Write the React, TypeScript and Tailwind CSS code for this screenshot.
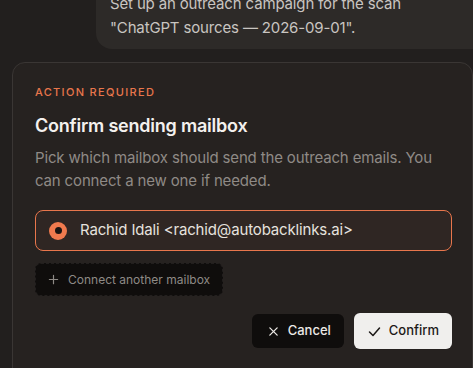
import React from "react";

export default function App() {
  return (
    <div
      className="w-[473px] h-[368px] overflow-hidden bg-[#221f1e] text-[#e8e4e0]"
      style={{ fontFamily: "Inter, 'Noto Sans', sans-serif" }}
    >
      <div className="-mt-[18px] pl-3 flex flex-col">
        <div className="ml-[84px] rounded-2xl rounded-br-none bg-[#2d2a28] pl-[14px] pr-4 pt-[10px] pb-[9px] text-[15px] leading-6 tracking-[-0.01em] text-[#c9c5c1]">
          <p>Set up an outreach campaign for the scan</p>
          <p>"ChatGPT sources — 2026-09-01".</p>
        </div>

        <div className="mt-[13px] h-[320px] rounded-[13px] border border-[#3a3634] bg-[#262220] pl-[22px] pr-[20px] pt-[21px]">
          <div className="text-[11px] leading-4 font-medium tracking-[0.12em] text-[#e8764c]">
            ACTION REQUIRED
          </div>
          <h2 className="mt-3 text-[18px] leading-7 font-semibold tracking-[-0.012em] text-[#f4f1ee]">
            Confirm sending mailbox
          </h2>
          <p className="mt-[7px] text-[15px] leading-[22.5px] tracking-[-0.01em] text-[#8f8a86]">
            Pick which mailbox should send the outreach emails. You can connect a new one if needed.
          </p>

          <div className="mt-[18px] flex h-[41px] items-center gap-[13px] rounded-lg border border-[#e8764c] bg-[#2f2623] px-[13px]">
            <span className="flex h-[18px] w-[18px] items-center justify-center rounded-full bg-[#f07a4e]">
              <span className="h-[7px] w-[7px] rounded-full bg-[#1a1412]" />
            </span>
            <span className="text-[15px] tracking-[-0.01em] text-[#e6e2de]">Rachid Idali &lt;rachid@autobacklinks.ai&gt;</span>
          </div>

          <div className="mt-3 flex">
            <button className="flex h-[33px] items-center gap-[9px] rounded-md border border-dashed border-[#221f1e] bg-[#0f0d0c] pl-3 pr-3 text-[12px] text-[#8e8a86]">
              <svg width="11" height="11" viewBox="0 0 12 12" fill="none" stroke="currentColor" strokeWidth="1.3" strokeLinecap="round">
                <path d="M6 1.5v9M1.5 6h9" />
              </svg>
              Connect another mailbox
            </button>
          </div>

          <div className="mt-[17px] flex items-center justify-end gap-[10px]">
            <button className="flex h-[34px] items-center gap-[9px] rounded-md bg-[#0f0d0c] pl-[16px] pr-[13px] text-[13px] font-medium text-[#ece9e6]">
              <svg width="11" height="11" viewBox="0 0 12 12" fill="none" stroke="currentColor" strokeWidth="1.4" strokeLinecap="round">
                <path d="M2 2l8 8M10 2l-8 8" />
              </svg>
              Cancel
            </button>
            <button className="flex h-[36px] items-center gap-[8px] rounded-md bg-[#f0efed] pl-[14px] pr-[13px] text-[13px] font-medium text-[#1c1917]">
              <svg width="13" height="13" viewBox="0 0 13 13" fill="none" stroke="currentColor" strokeWidth="1.5" strokeLinecap="round" strokeLinejoin="round">
                <path d="M1.5 7l3.5 3.5L11.5 3" />
              </svg>
              Confirm
            </button>
          </div>
        </div>
      </div>
    </div>
  );
}
